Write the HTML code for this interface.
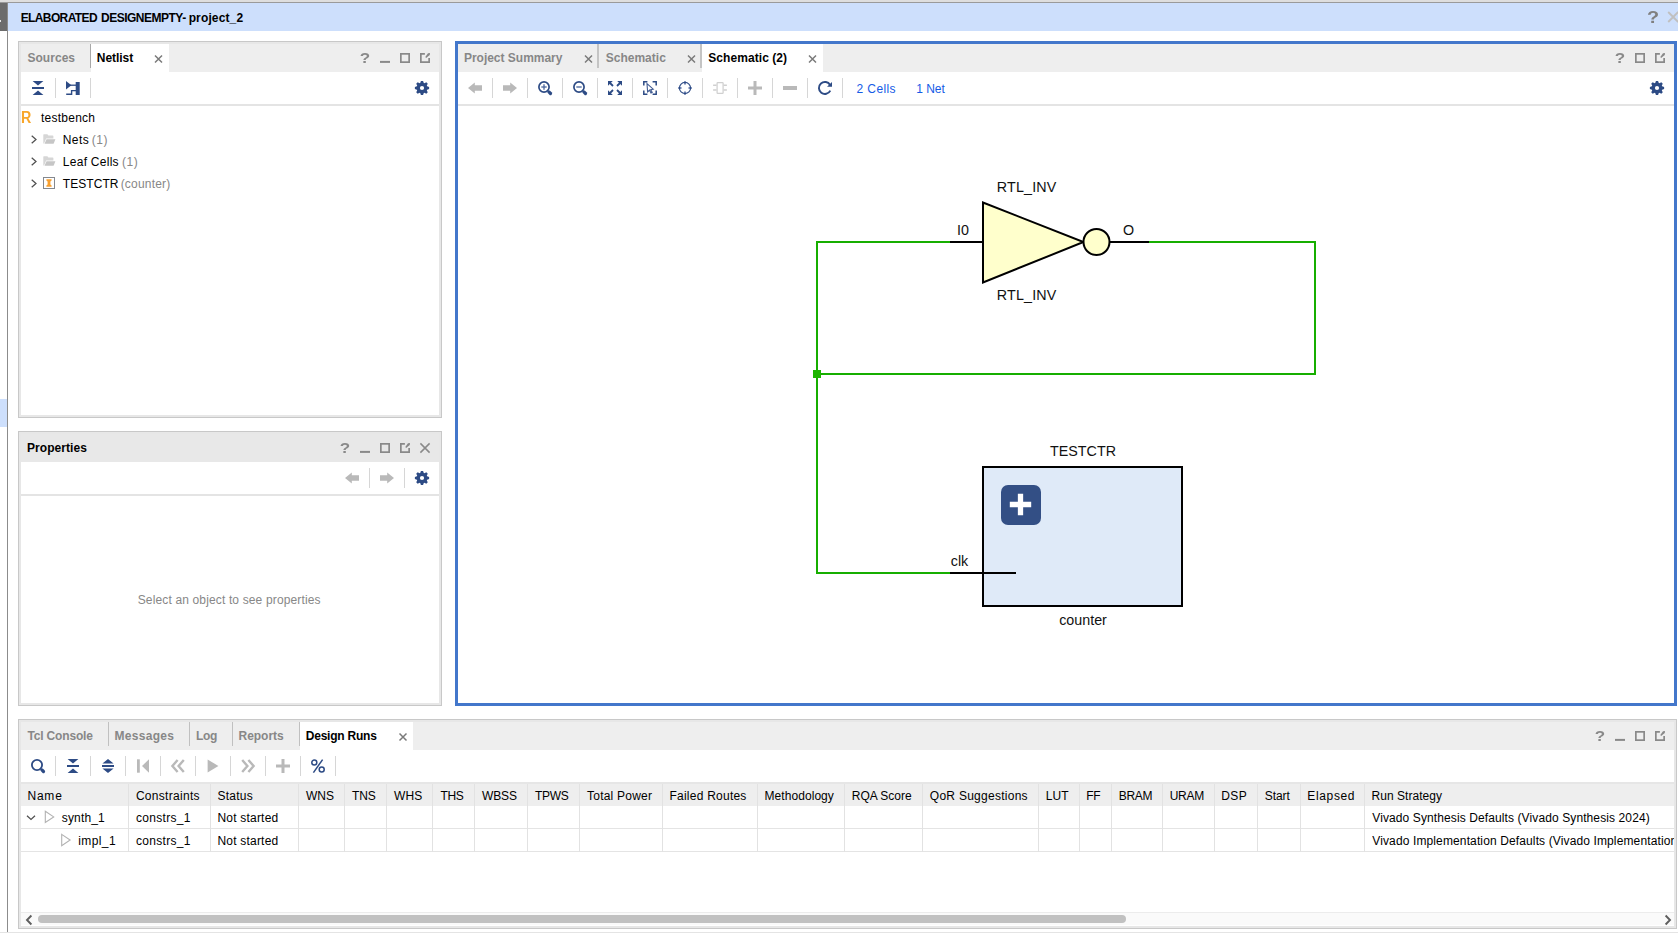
<!DOCTYPE html>
<html><head><meta charset="utf-8"><title>project_2 - Vivado</title>
<style>
html,body{margin:0;padding:0}
body{width:1678px;height:933px;overflow:hidden;background:#fff;position:relative;
 font-family:"Liberation Sans",sans-serif;font-size:12px;color:#000;line-height:14px}
div,svg,span{box-sizing:border-box}
.a{position:absolute}
.i{position:absolute;overflow:visible}
.t{position:absolute;white-space:nowrap;line-height:14px;height:14px}
.b{font-weight:bold}
.g{color:#878787}
.sep{position:absolute;width:1px;background:#d6d6d6}
.q{position:absolute;width:12px;text-align:center;font-weight:bold;font-size:14px;line-height:18px;height:18px}
.panel{position:absolute;border:1px solid #c8c8c8;background:#fff}
.panel>.in{position:absolute;left:0;top:0;right:0;bottom:0;border:2px solid #e7e7e7}
.hdr{position:absolute;background:#eeeeee}
.ln{position:absolute;background:#e4e4e4}
.vl{position:absolute;width:1px;background:#e2e2e2}
</style></head><body>

<div class="a" style="left:0;top:0;width:1678px;height:2px;background:#dedede"></div>
<div class="a" style="left:0;top:2px;width:1678px;height:1px;background:#9a9a9a"></div>
<div class="a" style="left:8px;top:3px;width:1670px;height:28px;background:#cddffc"></div>
<div class="a" style="left:0;top:3px;width:7px;height:27.6px;background:#6c6c6c"></div>
<div class="a" style="left:0;top:20px;width:1px;height:2px;background:#e8e8e8"></div>
<div class="a" style="left:7px;top:3px;width:1px;height:929px;background:#8c8c8c"></div>
<div class="a" style="left:0;top:399px;width:7px;height:28px;background:#cddffc"></div>
<div id="ti1" class="t b" style="left:20.72px;top:11px;letter-spacing:-0.623px;color:#000">ELABORATED</div>
<div id="ti2" class="t b" style="left:101.06px;top:11px;letter-spacing:-0.508px;color:#000">DESIGNEMPTY-</div>
<div id="ti3" class="t b" style="left:188.67px;top:11px;letter-spacing:0.137px;color:#000">project_2</div>
<svg class="i" style="left:1667px;top:11px" width="13" height="12" viewBox="0 0 13 12" ><g transform="translate(0.2 0)"><path d="M1 1L11 11M11 1L1 11" stroke="#c0c0c0" stroke-width="1.9" fill="none"/></g></svg>
<div class="panel" style="left:18px;top:41px;width:424px;height:377px"><div class="in"></div></div>
<div class="hdr" style="left:21px;top:44px;width:418px;height:28px"></div>
<div class="a" style="left:91px;top:44px;width:78px;height:28px;background:#fff"></div>
<div class="a" style="left:90px;top:44px;width:1px;height:24px;background:#a8a8a8"></div>
<div id="tb1" class="t b g" style="left:27.42px;top:51px;letter-spacing:0.046px;">Sources</div>
<div id="tb2" class="t b" style="left:96.80px;top:51px;letter-spacing:-0.055px;color:#000">Netlist</div>
<svg class="i" style="left:152px;top:53px" width="13" height="12" viewBox="0 0 13 12" ><g transform="translate(0.5 0)"><path d="M2.5 2.5L9.5 9.5M9.5 2.5L2.5 9.5" stroke="#7a7a7a" stroke-width="1.5" fill="none"/></g></svg>
<svg class="i" style="left:380px;top:53px" width="10" height="10" viewBox="0 0 10 10" ><rect x="0" y="7.9" width="10" height="2" fill="#898989"/></svg>
<svg class="i" style="left:400px;top:53px" width="10" height="10" viewBox="0 0 10 10" ><rect x="0.85" y="0.85" width="8.3" height="8.3" fill="none" stroke="#898989" stroke-width="1.7"/></svg>
<svg class="i" style="left:420px;top:53px" width="10" height="10" viewBox="0 0 10 10" ><path d="M4.9 0.85H0.85V9.15H9.15V5" fill="none" stroke="#898989" stroke-width="1.7"/><path d="M5.3 4.1L8 0.2L10 0L9.800 2L6.100 4.900Z" fill="#898989"/></svg>
<svg class="i" style="left:31px;top:80px" width="14" height="16" viewBox="0 0 14 16" ><path d="M1.6 1H12.4L7 5.4Z M1 7H13V9H1Z M7 10.6L12.4 15H1.6Z" fill="#2d4b85"/></svg>
<div class="sep" style="left:55px;top:78px;height:20px"></div>
<svg class="i" style="left:65px;top:80px" width="16" height="16" viewBox="0 0 16 16" ><path d="M1 1L6.4 5.2L1 9.6Z" fill="#2d4b85"/><path d="M5 5.2H11" stroke="#2d4b85" stroke-width="1.3"/><rect x="10.7" y="2" width="4" height="13" fill="#2d4b85"/><path d="M1.2 14.3H6.6V10.6H11" fill="none" stroke="#2d4b85" stroke-width="1.4"/></svg>
<div class="sep" style="left:90px;top:78px;height:20px"></div>
<svg class="i" style="left:414px;top:80px" width="16" height="16" viewBox="0 0 16 16" ><path d="M6.35 2.86L6.92 0.88L9.08 0.88L9.65 2.86L10.47 3.20L12.27 2.21L13.79 3.73L12.80 5.53L13.14 6.35L15.12 6.92L15.12 9.08L13.14 9.65L12.80 10.47L13.79 12.27L12.27 13.79L10.47 12.80L9.65 13.14L9.08 15.12L6.92 15.12L6.35 13.14L5.53 12.80L3.73 13.79L2.21 12.27L3.20 10.47L2.86 9.65L0.88 9.08L0.88 6.92L2.86 6.35L3.20 5.53L2.21 3.73L3.73 2.21L5.53 3.20ZM8 5.9A2.1 2.1 0 1 0 8 10.1A2.1 2.1 0 1 0 8 5.9Z" fill="#2d4b85" fill-rule="evenodd"/></svg>
<div class="ln" style="left:21px;top:104px;width:418px;height:2px"></div>
<div id="tr0" class="t " style="left:41.03px;top:111px;letter-spacing:0.239px;">testbench</div>
<svg class="i" style="left:30px;top:134px" width="8" height="11" viewBox="0 0 8 11" ><g transform="translate(0 0.5)"><path d="M1.7 1.2L6 5L1.700 8.800" fill="none" stroke="#505050" stroke-width="1.25"/></g></svg>
<svg class="i" style="left:43px;top:133px" width="13" height="12" viewBox="0 0 13 12" ><g transform="translate(0 0.6)"><path d="M0.3 1.2Q0.3 0.6 0.9 0.6H4.400L5.400 1.800H9.800Q10.400 1.800 10.400 2.400V5H3.200L1 10H0.300Z" fill="#d6d6d6"/><path d="M3.5 5.600H12.400L10.600 10.200H1.500Z" fill="#c6c6c6"/></g></svg>
<div id="tr1a" class="t " style="left:62.82px;top:133.0px;letter-spacing:0.392px;">Nets</div>
<div id="tr1b" class="t g" style="left:91.84px;top:133.0px;letter-spacing:0.477px;">(1)</div>
<svg class="i" style="left:30px;top:156px" width="8" height="11" viewBox="0 0 8 11" ><g transform="translate(0 0.5)"><path d="M1.7 1.2L6 5L1.700 8.800" fill="none" stroke="#505050" stroke-width="1.25"/></g></svg>
<svg class="i" style="left:43px;top:155px" width="13" height="12" viewBox="0 0 13 12" ><g transform="translate(0 0.6)"><path d="M0.3 1.2Q0.3 0.6 0.9 0.6H4.400L5.400 1.800H9.800Q10.400 1.800 10.400 2.400V5H3.200L1 10H0.300Z" fill="#d6d6d6"/><path d="M3.5 5.600H12.400L10.600 10.200H1.500Z" fill="#c6c6c6"/></g></svg>
<div id="tr2a" class="t " style="left:62.82px;top:155.0px;letter-spacing:0.269px;">Leaf Cells</div>
<div id="tr2b" class="t g" style="left:121.98px;top:155.0px;letter-spacing:0.504px;">(1)</div>
<svg class="i" style="left:30px;top:178px" width="8" height="11" viewBox="0 0 8 11" ><g transform="translate(0 0.5)"><path d="M1.7 1.2L6 5L1.700 8.800" fill="none" stroke="#505050" stroke-width="1.25"/></g></svg>
<svg class="i" style="left:43px;top:177px" width="13" height="13" viewBox="0 0 13 13" ><rect x="0.5" y="0.500" width="11" height="11" fill="#fff" stroke="#84888e"/><path d="M3.4 2.200H8.600V3.400L7.400 4.600V7.400L8.600 8.600V9.800H3.400V8.600L4.600 7.400V4.600L3.400 3.400Z" fill="#f8a030"/></svg>
<div id="tr3a" class="t " style="left:62.87px;top:177.0px;letter-spacing:0.041px;">TESTCTR</div>
<div id="tr3b" class="t g" style="left:120.65px;top:177.0px;letter-spacing:0.205px;">(counter)</div>
<div class="panel" style="left:18px;top:431px;width:424px;height:275px"><div class="in"></div></div>
<div class="hdr" style="left:21px;top:434px;width:418px;height:28px;background:#e8e8e8"></div>
<div id="pr1" class="t b" style="left:26.97px;top:441px;letter-spacing:0.067px;color:#000">Properties</div>
<svg class="i" style="left:360px;top:443px" width="10" height="10" viewBox="0 0 10 10" ><rect x="0" y="7.9" width="10" height="2" fill="#898989"/></svg>
<svg class="i" style="left:380px;top:443px" width="10" height="10" viewBox="0 0 10 10" ><rect x="0.85" y="0.85" width="8.3" height="8.3" fill="none" stroke="#898989" stroke-width="1.7"/></svg>
<svg class="i" style="left:400px;top:443px" width="10" height="10" viewBox="0 0 10 10" ><path d="M4.9 0.85H0.85V9.15H9.15V5" fill="none" stroke="#898989" stroke-width="1.7"/><path d="M5.3 4.1L8 0.2L10 0L9.800 2L6.100 4.900Z" fill="#898989"/></svg>
<svg class="i" style="left:419px;top:442px" width="12" height="12" viewBox="0 0 12 12" ><path d="M1.4000000000000004 1.4000000000000004L10.6 10.6M10.6 1.4000000000000004L1.4000000000000004 10.6" stroke="#898989" stroke-width="1.5" fill="none"/></svg>
<svg class="i" style="left:345px;top:472px" width="14" height="12" viewBox="0 0 14 12" ><path d="M0 6L6.8 0.4V3.3H14V8.7H6.8V11.6Z" fill="#b9b9b9"/></svg>
<div class="sep" style="left:369px;top:468px;height:20px"></div>
<svg class="i" style="left:380px;top:472px" width="14" height="12" viewBox="0 0 14 12" ><path d="M14 6L7.2 0.4V3.3H0V8.7H7.2V11.6Z" fill="#b9b9b9"/></svg>
<div class="sep" style="left:404px;top:468px;height:20px"></div>
<svg class="i" style="left:414px;top:470px" width="16" height="16" viewBox="0 0 16 16" ><path d="M6.35 2.86L6.92 0.88L9.08 0.88L9.65 2.86L10.47 3.20L12.27 2.21L13.79 3.73L12.80 5.53L13.14 6.35L15.12 6.92L15.12 9.08L13.14 9.65L12.80 10.47L13.79 12.27L12.27 13.79L10.47 12.80L9.65 13.14L9.08 15.12L6.92 15.12L6.35 13.14L5.53 12.80L3.73 13.79L2.21 12.27L3.20 10.47L2.86 9.65L0.88 9.08L0.88 6.92L2.86 6.35L3.20 5.53L2.21 3.73L3.73 2.21L5.53 3.20ZM8 5.9A2.1 2.1 0 1 0 8 10.1A2.1 2.1 0 1 0 8 5.9Z" fill="#2d4b85" fill-rule="evenodd"/></svg>
<div class="ln" style="left:21px;top:494px;width:418px;height:2px"></div>
<div id="pr2" class="t g" style="left:137.68px;top:593px;letter-spacing:0.146px;">Select an object to see properties</div>
<div class="a" style="left:455px;top:41px;width:1222px;height:665px;border:3px solid #4377cb;background:#fff"></div>
<div class="hdr" style="left:458px;top:44px;width:1216px;height:28px"></div>
<div class="a" style="left:702px;top:44px;width:121px;height:28px;background:#fff"></div>
<div class="a" style="left:597px;top:44px;width:2px;height:24px;background:#c4c4c4"></div>
<div class="a" style="left:700px;top:44px;width:2px;height:24px;background:#c4c4c4"></div>
<div id="st1" class="t b g" style="left:463.95px;top:51px;letter-spacing:-0.016px;">Project Summary</div>
<svg class="i" style="left:582px;top:53px" width="13" height="12" viewBox="0 0 13 12" ><g transform="translate(0.5 0)"><path d="M2.5 2.5L9.5 9.5M9.5 2.5L2.5 9.5" stroke="#7a7a7a" stroke-width="1.5" fill="none"/></g></svg>
<div id="st2" class="t b g" style="left:605.68px;top:51px;letter-spacing:0.016px;">Schematic</div>
<svg class="i" style="left:685px;top:53px" width="13" height="12" viewBox="0 0 13 12" ><g transform="translate(0.5 0)"><path d="M2.5 2.5L9.5 9.5M9.5 2.5L2.5 9.5" stroke="#7a7a7a" stroke-width="1.5" fill="none"/></g></svg>
<div id="st3" class="t b" style="left:708.28px;top:51px;letter-spacing:0.068px;color:#000">Schematic (2)</div>
<svg class="i" style="left:806px;top:53px" width="13" height="12" viewBox="0 0 13 12" ><g transform="translate(0.5 0)"><path d="M2.5 2.5L9.5 9.5M9.5 2.5L2.5 9.5" stroke="#7a7a7a" stroke-width="1.5" fill="none"/></g></svg>
<svg class="i" style="left:1635px;top:53px" width="10" height="10" viewBox="0 0 10 10" ><rect x="0.85" y="0.85" width="8.3" height="8.3" fill="none" stroke="#898989" stroke-width="1.7"/></svg>
<svg class="i" style="left:1655px;top:53px" width="10" height="10" viewBox="0 0 10 10" ><path d="M4.9 0.85H0.85V9.15H9.15V5" fill="none" stroke="#898989" stroke-width="1.7"/><path d="M5.3 4.1L8 0.2L10 0L9.800 2L6.100 4.900Z" fill="#898989"/></svg>
<svg class="i" style="left:468px;top:82px" width="14" height="12" viewBox="0 0 14 12" ><path d="M0 6L6.8 0.4V3.3H14V8.7H6.8V11.6Z" fill="#b9b9b9"/></svg>
<div class="sep" style="left:492px;top:78px;height:20px"></div>
<svg class="i" style="left:503px;top:82px" width="14" height="12" viewBox="0 0 14 12" ><path d="M14 6L7.2 0.4V3.3H0V8.7H7.2V11.6Z" fill="#b9b9b9"/></svg>
<div class="sep" style="left:527px;top:78px;height:20px"></div>
<svg class="i" style="left:538px;top:81px" width="15" height="15" viewBox="0 0 15 15" ><circle cx="6" cy="6" r="5.1" fill="none" stroke="#2d4b85" stroke-width="1.7"/><path d="M10.9 10.9L12.5 12.5" stroke="#2d4b85" stroke-width="3.2" stroke-linecap="round"/><path d="M3.3 6H8.7" stroke="#4a659b" stroke-width="1.3"/><path d="M6 3.3V8.7" stroke="#4a659b" stroke-width="1.3"/></svg>
<div class="sep" style="left:562px;top:78px;height:20px"></div>
<svg class="i" style="left:573px;top:81px" width="15" height="15" viewBox="0 0 15 15" ><circle cx="6" cy="6" r="5.1" fill="none" stroke="#2d4b85" stroke-width="1.7"/><path d="M10.9 10.9L12.5 12.5" stroke="#2d4b85" stroke-width="3.2" stroke-linecap="round"/><path d="M3.3 6H8.7" stroke="#4a659b" stroke-width="1.3"/></svg>
<div class="sep" style="left:597px;top:78px;height:20px"></div>
<svg class="i" style="left:608px;top:81px" width="14" height="14" viewBox="0 0 14 14" ><path d="M0 0H4.8L0 4.8Z M14 0V4.8L9.2 0Z M0 14V9.2L4.8 14Z M14 14H9.2L14 9.2Z" fill="#2d4b85"/><path d="M1.5 1.5L5 5M12.5 1.5L9 5M1.5 12.5L5 9M12.5 12.5L9 9" stroke="#2d4b85" stroke-width="1.8"/></svg>
<div class="sep" style="left:632px;top:78px;height:20px"></div>
<svg class="i" style="left:643px;top:81px" width="14" height="14" viewBox="0 0 14 14" ><path d="M0.8 4.4V0.8H4.4M9.6 0.8H13.2V4.4M13.2 9.6V13.2H9.6M4.4 13.2H0.8V9.6" fill="none" stroke="#2d4b85" stroke-width="1.5"/><path d="M4 2.6L10.2 8.2L7.8 8.6L9.2 11.4L8 12L6.6 9.2L4.6 10.8Z" fill="#fff" stroke="#425c93" stroke-width="1.1"/></svg>
<div class="sep" style="left:667px;top:78px;height:20px"></div>
<svg class="i" style="left:677px;top:80px" width="16" height="16" viewBox="0 0 16 16" ><g transform="translate(0.5 0.5)"><path d="M7.5 0.7V4M7.5 11V14.3M0.7 7.500H4M11 7.500H14.300" stroke="#7084b2" stroke-width="2"/><circle cx="7.5" cy="7.5" r="5.6" fill="none" stroke="#2d4b85" stroke-width="1.15"/></g></svg>
<div class="sep" style="left:702px;top:78px;height:20px"></div>
<svg class="i" style="left:713px;top:81px" width="14" height="14" viewBox="0 0 14 14" ><rect x="4.1" y="1.6" width="6" height="10.8" rx="0.6" fill="none" stroke="#d0d0d0" stroke-width="1.25"/><path d="M0.1 4.3H3.600M0.100 8.900H3.600M10.500 4.300H13.900M10.500 8.900H13.900" stroke="#d0d0d0" stroke-width="1.5"/></svg>
<div class="sep" style="left:737px;top:78px;height:20px"></div>
<svg class="i" style="left:748px;top:81px" width="14" height="14" viewBox="0 0 14 14" ><path d="M5.5 0H8.5V5.5H14V8.5H8.5V14H5.5V8.5H0V5.5H5.5Z" fill="#b9b9b9"/></svg>
<div class="sep" style="left:772px;top:78px;height:20px"></div>
<svg class="i" style="left:783px;top:86px" width="14" height="4" viewBox="0 0 14 4" ><rect width="14" height="4" fill="#b9b9b9"/></svg>
<div class="sep" style="left:807px;top:78px;height:20px"></div>
<svg class="i" style="left:817px;top:80px" width="16" height="16" viewBox="0 0 16 16" ><path d="M13.1 4.9A6 6 0 1 0 13.3 10.6" fill="none" stroke="#2d4b85" stroke-width="1.9"/><path d="M15 2V6.8H10Z" fill="#2d4b85"/></svg>
<div class="sep" style="left:842px;top:78px;height:20px"></div>
<div id="lk1" class="t " style="left:856.62px;top:82px;letter-spacing:0.365px;color:#145be6">2 Cells</div>
<div id="lk2" class="t " style="left:916.34px;top:82px;letter-spacing:-0.044px;color:#145be6">1 Net</div>
<svg class="i" style="left:1649px;top:80px" width="16" height="16" viewBox="0 0 16 16" ><path d="M6.35 2.86L6.92 0.88L9.08 0.88L9.65 2.86L10.47 3.20L12.27 2.21L13.79 3.73L12.80 5.53L13.14 6.35L15.12 6.92L15.12 9.08L13.14 9.65L12.80 10.47L13.79 12.27L12.27 13.79L10.47 12.80L9.65 13.14L9.08 15.12L6.92 15.12L6.35 13.14L5.53 12.80L3.73 13.79L2.21 12.27L3.20 10.47L2.86 9.65L0.88 9.08L0.88 6.92L2.86 6.35L3.20 5.53L2.21 3.73L3.73 2.21L5.53 3.20ZM8 5.9A2.1 2.1 0 1 0 8 10.1A2.1 2.1 0 1 0 8 5.9Z" fill="#2d4b85" fill-rule="evenodd"/></svg>
<div class="ln" style="left:458px;top:104px;width:1216px;height:2px"></div>
<svg class="i" style="left:0;top:0" width="1678" height="933" viewBox="0 0 1678 933"><path d="M950 242H817V573H950" fill="none" stroke="#17ae00" stroke-width="2"/><path d="M1149 242H1315V374H817" fill="none" stroke="#17ae00" stroke-width="2"/><rect x="813" y="370" width="8" height="8" fill="#1db500"/><path d="M950 242H983M1110 242H1149" stroke="#000" stroke-width="2"/><path d="M983 202.5V282.5L1083.5 242Z" fill="#ffffcc" stroke="#000" stroke-width="2" stroke-linejoin="miter"/><circle cx="1096.5" cy="242" r="13" fill="#ffffcc" stroke="#000" stroke-width="2"/><rect x="983" y="467" width="199" height="139" fill="#dfeaf8" stroke="#000" stroke-width="2"/><path d="M950 573H1016" stroke="#000" stroke-width="2"/><rect x="1001" y="485" width="40" height="40" rx="7" fill="#334f85"/><path d="M1017.85 493.8H1023.15V501.85H1031.2V507.15H1023.15V515.2H1017.85V507.15H1009.8V501.85H1017.85Z" fill="#fff"/><text x="1026.7" y="192" text-anchor="middle" letter-spacing="0.16" font-family="Liberation Sans, sans-serif" font-size="14.3" fill="#111">RTL_INV</text><text x="1026.7" y="300" text-anchor="middle" letter-spacing="0.16" font-family="Liberation Sans, sans-serif" font-size="14.3" fill="#111">RTL_INV</text><text x="963" y="235" text-anchor="middle" font-family="Liberation Sans, sans-serif" font-size="14.3" fill="#111">I0</text><text x="1128.5" y="235" text-anchor="middle" font-family="Liberation Sans, sans-serif" font-size="14.3" fill="#111">O</text><text x="1083" y="456" text-anchor="middle" font-family="Liberation Sans, sans-serif" font-size="14.3" fill="#111">TESTCTR</text><text x="1083" y="625" text-anchor="middle" font-family="Liberation Sans, sans-serif" font-size="14.3" fill="#111">counter</text><text x="959.500" y="566" text-anchor="middle" font-family="Liberation Sans, sans-serif" font-size="14.3" fill="#111">clk</text></svg>
<div class="panel" style="left:18px;top:719px;width:1659px;height:210px"><div class="in"></div></div>
<div class="hdr" style="left:21px;top:722px;width:1653px;height:28px"></div>
<div class="a" style="left:300px;top:722px;width:113px;height:28px;background:#fff"></div>
<div class="a" style="left:108px;top:722px;width:1px;height:24px;background:#c0c0c0"></div>
<div class="a" style="left:189px;top:722px;width:1px;height:24px;background:#c0c0c0"></div>
<div class="a" style="left:232px;top:722px;width:1px;height:24px;background:#c0c0c0"></div>
<div class="a" style="left:299px;top:722px;width:1px;height:24px;background:#c0c0c0"></div>
<div id="bt0" class="t b g" style="left:27.50px;top:729px;letter-spacing:-0.174px;">Tcl Console</div>
<div id="bt1" class="t b g" style="left:114.59px;top:729px;letter-spacing:0.295px;">Messages</div>
<div id="bt2" class="t b g" style="left:195.95px;top:729px;letter-spacing:-0.354px;">Log</div>
<div id="bt3" class="t b g" style="left:238.59px;top:729px;letter-spacing:-0.049px;">Reports</div>
<div id="bt4" class="t b" style="left:305.80px;top:729px;letter-spacing:-0.231px;color:#000">Design Runs</div>
<svg class="i" style="left:397px;top:731px" width="12" height="12" viewBox="0 0 12 12" ><path d="M2.5 2.5L9.5 9.5M9.5 2.5L2.5 9.5" stroke="#7a7a7a" stroke-width="1.5" fill="none"/></svg>
<svg class="i" style="left:1615px;top:731px" width="10" height="10" viewBox="0 0 10 10" ><rect x="0" y="7.9" width="10" height="2" fill="#898989"/></svg>
<svg class="i" style="left:1635px;top:731px" width="10" height="10" viewBox="0 0 10 10" ><rect x="0.85" y="0.85" width="8.3" height="8.3" fill="none" stroke="#898989" stroke-width="1.7"/></svg>
<svg class="i" style="left:1655px;top:731px" width="10" height="10" viewBox="0 0 10 10" ><path d="M4.9 0.85H0.85V9.15H9.15V5" fill="none" stroke="#898989" stroke-width="1.7"/><path d="M5.3 4.1L8 0.2L10 0L9.800 2L6.100 4.900Z" fill="#898989"/></svg>
<svg class="i" style="left:31px;top:759px" width="15" height="15" viewBox="0 0 15 15" ><circle cx="6" cy="6" r="5.1" fill="none" stroke="#2d4b85" stroke-width="1.8"/><path d="M10.9 10.9L12.5 12.5" stroke="#2d4b85" stroke-width="3.2" stroke-linecap="round"/></svg>
<div class="sep" style="left:55px;top:756px;height:20px"></div>
<svg class="i" style="left:66px;top:758px" width="14" height="16" viewBox="0 0 14 16" ><path d="M1.6 1H12.4L7 5.4Z M1 7H13V9H1Z M7 10.6L12.4 15H1.6Z" fill="#2d4b85"/></svg>
<div class="sep" style="left:90px;top:756px;height:20px"></div>
<svg class="i" style="left:101px;top:758px" width="14" height="16" viewBox="0 0 14 16" ><path d="M7 1L12.6 5.6H1.4Z M1 7H13V9H1Z M1.4 10.4H12.6L7 15Z" fill="#2d4b85"/></svg>
<div class="sep" style="left:125px;top:756px;height:20px"></div>
<svg class="i" style="left:137px;top:759px" width="12" height="14" viewBox="0 0 12 14" ><rect x="0" y="0.3" width="2.8" height="13.4" fill="#b9b9b9"/><path d="M12 0.3V13.7L5 7Z" fill="#b9b9b9"/></svg>
<div class="sep" style="left:160px;top:756px;height:20px"></div>
<svg class="i" style="left:171px;top:759px" width="14" height="14" viewBox="0 0 14 14" ><path d="M6.6 1L1.4 7L6.6 13M12.8 1L7.6 7L12.8 13" fill="none" stroke="#b9b9b9" stroke-width="2.4"/></svg>
<div class="sep" style="left:195px;top:756px;height:20px"></div>
<svg class="i" style="left:207px;top:759px" width="12" height="14" viewBox="0 0 12 14" ><path d="M0.6 0.4L11.4 7L0.6 13.6Z" fill="#b9b9b9"/></svg>
<div class="sep" style="left:230px;top:756px;height:20px"></div>
<svg class="i" style="left:241px;top:759px" width="14" height="14" viewBox="0 0 14 14" ><path d="M1.2 1L6.4 7L1.2 13M7.4 1L12.6 7L7.4 13" fill="none" stroke="#b9b9b9" stroke-width="2.4"/></svg>
<div class="sep" style="left:265px;top:756px;height:20px"></div>
<svg class="i" style="left:276px;top:759px" width="14" height="14" viewBox="0 0 14 14" ><path d="M5.5 0H8.5V5.5H14V8.5H8.5V14H5.5V8.5H0V5.5H5.5Z" fill="#b9b9b9"/></svg>
<div class="sep" style="left:300px;top:756px;height:20px"></div>
<svg class="i" style="left:311px;top:759px" width="14" height="14" viewBox="0 0 14 14" ><circle cx="3.3" cy="3.6" r="2.5" fill="none" stroke="#2d4b85" stroke-width="1.5"/><circle cx="10.7" cy="10.6" r="2.5" fill="none" stroke="#2d4b85" stroke-width="1.5"/><path d="M11.6 0.6L2.4 13.6" stroke="#2d4b85" stroke-width="1.5"/></svg>
<div class="sep" style="left:335px;top:756px;height:20px"></div>
<div class="a" style="left:21px;top:782px;width:1653px;height:2px;background:#e6e6e6"></div>
<div class="a" style="left:21px;top:784px;width:1653px;height:22px;background:#eeeeee"></div>
<div class="ln" style="left:21px;top:828px;width:1653px;height:1px"></div>
<div class="ln" style="left:21px;top:851px;width:1653px;height:1px"></div>
<div class="vl" style="left:128px;top:784px;height:68px"></div>
<div class="vl" style="left:210px;top:784px;height:68px"></div>
<div class="vl" style="left:298px;top:784px;height:68px"></div>
<div class="vl" style="left:344px;top:784px;height:68px"></div>
<div class="vl" style="left:386px;top:784px;height:68px"></div>
<div class="vl" style="left:432px;top:784px;height:68px"></div>
<div class="vl" style="left:474px;top:784px;height:68px"></div>
<div class="vl" style="left:527px;top:784px;height:68px"></div>
<div class="vl" style="left:579px;top:784px;height:68px"></div>
<div class="vl" style="left:662px;top:784px;height:68px"></div>
<div class="vl" style="left:757px;top:784px;height:68px"></div>
<div class="vl" style="left:844px;top:784px;height:68px"></div>
<div class="vl" style="left:922px;top:784px;height:68px"></div>
<div class="vl" style="left:1038px;top:784px;height:68px"></div>
<div class="vl" style="left:1079px;top:784px;height:68px"></div>
<div class="vl" style="left:1111px;top:784px;height:68px"></div>
<div class="vl" style="left:1162px;top:784px;height:68px"></div>
<div class="vl" style="left:1214px;top:784px;height:68px"></div>
<div class="vl" style="left:1257px;top:784px;height:68px"></div>
<div class="vl" style="left:1300px;top:784px;height:68px"></div>
<div class="vl" style="left:1364px;top:784px;height:68px"></div>
<div id="h0" class="t " style="left:27.46px;top:789px;letter-spacing:0.783px;">Name</div>
<div id="h1" class="t " style="left:135.92px;top:789px;letter-spacing:0.291px;">Constraints</div>
<div id="h2" class="t " style="left:217.46px;top:789px;letter-spacing:0.246px;">Status</div>
<div id="h3" class="t " style="left:306.01px;top:789px;letter-spacing:0.041px;">WNS</div>
<div id="h4" class="t " style="left:352.04px;top:789px;letter-spacing:-0.113px;">TNS</div>
<div id="h5" class="t " style="left:393.92px;top:789px;letter-spacing:0.201px;">WHS</div>
<div id="h6" class="t " style="left:440.48px;top:789px;letter-spacing:-0.397px;">THS</div>
<div id="h7" class="t " style="left:481.99px;top:789px;letter-spacing:-0.103px;">WBSS</div>
<div id="h8" class="t " style="left:534.99px;top:789px;letter-spacing:-0.291px;">TPWS</div>
<div id="h9" class="t " style="left:587.04px;top:789px;letter-spacing:0.218px;">Total Power</div>
<div id="h10" class="t " style="left:669.46px;top:789px;letter-spacing:0.240px;">Failed Routes</div>
<div id="h11" class="t " style="left:764.49px;top:789px;letter-spacing:0.066px;">Methodology</div>
<div id="h12" class="t " style="left:851.74px;top:789px;letter-spacing:-0.012px;">RQA Score</div>
<div id="h13" class="t " style="left:929.83px;top:789px;letter-spacing:0.266px;">QoR Suggestions</div>
<div id="h14" class="t " style="left:1045.74px;top:789px;letter-spacing:0.097px;">LUT</div>
<div id="h15" class="t " style="left:1086.34px;top:789px;letter-spacing:-0.285px;">FF</div>
<div id="h16" class="t " style="left:1118.82px;top:789px;letter-spacing:-0.323px;">BRAM</div>
<div id="h17" class="t " style="left:1169.66px;top:789px;letter-spacing:-0.237px;">URAM</div>
<div id="h18" class="t " style="left:1221.36px;top:789px;letter-spacing:0.327px;">DSP</div>
<div id="h19" class="t " style="left:1264.86px;top:789px;letter-spacing:-0.084px;">Start</div>
<div id="h20" class="t " style="left:1307.34px;top:789px;letter-spacing:0.636px;">Elapsed</div>
<div id="h21" class="t " style="left:1371.49px;top:789px;letter-spacing:0.039px;">Run Strategy</div>
<svg class="i" style="left:26px;top:813px" width="10" height="9" viewBox="0 0 10 9" ><g transform="translate(0 0.5)"><path d="M1 2.300L5 6L9 2.300" fill="none" stroke="#505050" stroke-width="1.25"/></g></svg>
<svg class="i" style="left:44px;top:810px" width="12" height="15" viewBox="0 0 12 15" ><g transform="translate(0.4 0.4)"><path d="M0.9 0.9L9.3 6.500L0.900 12.100Z" fill="none" stroke="#b2b2b2" stroke-width="1.1"/></g></svg>
<div id="r1a" class="t " style="left:61.79px;top:811px;letter-spacing:0.153px;">synth_1</div>
<div id="r1b" class="t " style="left:136.01px;top:811px;letter-spacing:0.289px;">constrs_1</div>
<div id="r1c" class="t " style="left:217.40px;top:811px;letter-spacing:0.213px;">Not started</div>
<div id="r1d" class="t " style="left:1372.28px;top:811px;letter-spacing:0.105px;">Vivado Synthesis Defaults (Vivado Synthesis 2024)</div>
<svg class="i" style="left:60px;top:833px" width="12" height="15" viewBox="0 0 12 15" ><g transform="translate(0.8 0.5)"><path d="M0.9 0.9L9.3 6.500L0.900 12.100Z" fill="none" stroke="#b2b2b2" stroke-width="1.1"/></g></svg>
<div id="r2a" class="t " style="left:78.22px;top:834px;letter-spacing:0.405px;">impl_1</div>
<div id="r2b" class="t " style="left:136.01px;top:834px;letter-spacing:0.289px;">constrs_1</div>
<div id="r2c" class="t " style="left:217.40px;top:834px;letter-spacing:0.213px;">Not started</div>
<div class="t" style="left:1372.28px;top:834px;width:301.72px;overflow:hidden;letter-spacing:0.125px">Vivado Implementation Defaults (Vivado Implementation 2024)</div>
<div class="a" style="left:21px;top:912px;width:1653px;height:13px;background:#fafafa;border-top:1px solid #ececec"></div>
<div class="a" style="left:38px;top:915px;width:1088px;height:8px;border-radius:4px;background:#c1c1c1"></div>
<svg class="i" style="left:25px;top:914px" width="8" height="12" viewBox="0 0 8 12" ><g transform="translate(0 0.5)"><path d="M6.4 1L2 5.500L6.400 10" fill="none" stroke="#5e5e5e" stroke-width="1.9"/></g></svg>
<svg class="i" style="left:1664px;top:914px" width="8" height="12" viewBox="0 0 8 12" ><g transform="translate(0 0.5)"><path d="M1.600 1L6 5.500L1.600 10" fill="none" stroke="#5e5e5e" stroke-width="1.9"/></g></svg>
<div class="a" style="left:0;top:932px;width:1678px;height:1px;background:#e4e4e4"></div>
<svg class="i" style="left:1645px;top:9px;will-change:transform" width="16" height="17" viewBox="0 0 16 17" ><g transform="translate(0 0.9)"><text x="0" y="0" transform="translate(8 13.1) scale(1.18 1)" text-anchor="middle" font-family="Liberation Sans, sans-serif" font-weight="bold" font-size="16.8" fill="#808080">?</text></g></svg>
<svg class="i" style="left:357px;top:50px;will-change:transform" width="16" height="16" viewBox="0 0 16 16" ><text x="0" y="0" transform="translate(8 13.1) scale(1.2 1)" text-anchor="middle" font-family="Liberation Sans, sans-serif" font-weight="bold" font-size="14.2" fill="#898989">?</text></svg>
<svg class="i" style="left:18px;top:106px;will-change:transform" width="20" height="20" viewBox="0 0 20 20" ><text x="0" y="0" transform="translate(3.05 17) scale(0.85 1)" font-family="Liberation Sans, sans-serif" font-weight="bold" font-size="16.8" fill="#f8a62a">R</text></svg>
<svg class="i" style="left:337px;top:440px;will-change:transform" width="16" height="16" viewBox="0 0 16 16" ><text x="0" y="0" transform="translate(8 13.1) scale(1.2 1)" text-anchor="middle" font-family="Liberation Sans, sans-serif" font-weight="bold" font-size="14.2" fill="#898989">?</text></svg>
<svg class="i" style="left:1612px;top:50px;will-change:transform" width="16" height="16" viewBox="0 0 16 16" ><text x="0" y="0" transform="translate(8 13.1) scale(1.2 1)" text-anchor="middle" font-family="Liberation Sans, sans-serif" font-weight="bold" font-size="14.2" fill="#898989">?</text></svg>
<svg class="i" style="left:1592px;top:728px;will-change:transform" width="16" height="16" viewBox="0 0 16 16" ><text x="0" y="0" transform="translate(8 13.1) scale(1.2 1)" text-anchor="middle" font-family="Liberation Sans, sans-serif" font-weight="bold" font-size="14.2" fill="#898989">?</text></svg>
</body></html>
